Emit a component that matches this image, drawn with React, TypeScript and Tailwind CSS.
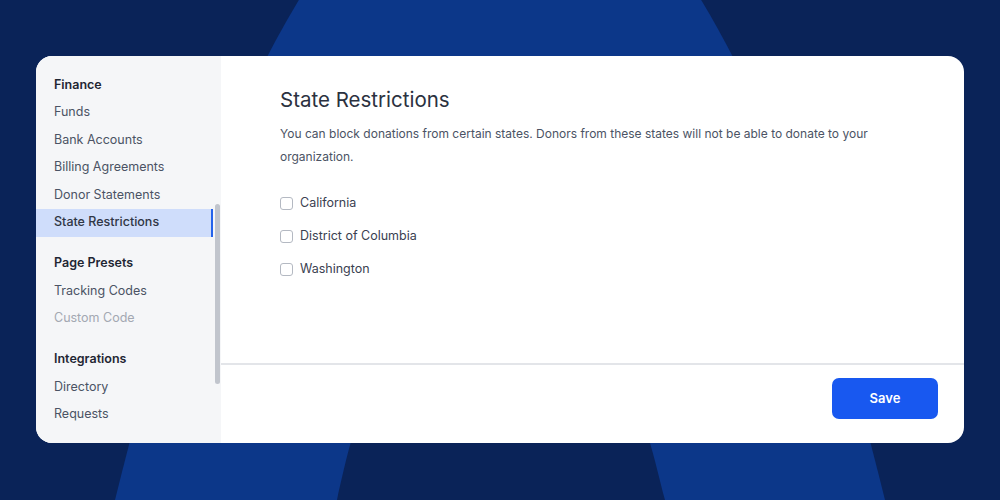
const font = { fontFamily: "Inter, 'Noto Sans', sans-serif" };

type NavGroup = { title: string; items: { label: string; active?: boolean; disabled?: boolean }[] };

const groups: NavGroup[] = [
  {
    title: "Finance",
    items: [
      { label: "Funds" },
      { label: "Bank Accounts" },
      { label: "Billing Agreements" },
      { label: "Donor Statements" },
      { label: "State Restrictions", active: true },
    ],
  },
  {
    title: "Page Presets",
    items: [{ label: "Tracking Codes" }, { label: "Custom Code", disabled: true }],
  },
  {
    title: "Integrations",
    items: [{ label: "Directory" }, { label: "Requests" }],
  },
];

const states = ["California", "District of Columbia", "Washington"];

function Backdrop() {
  return (
    <svg className="absolute inset-0" width="1000" height="500" viewBox="0 0 1000 500" aria-hidden="true">
      <path d="M115 500 C150 360 205 150 305 -10 L695 -10 C795 150 850 360 885 500 Z" fill="#0c3789" />
      <path d="M337 500 C355 420 380 300 500 250 C620 300 645 420 665 500 Z" fill="#0a2358" />
    </svg>
  );
}

function Sidebar() {
  return (
    <aside className="relative flex w-[185px] shrink-0 bg-[#f5f6f8]">
      <nav className="flex w-[177px] flex-col gap-[13.5px] pt-[15.5px]">
        {groups.map((g) => (
          <ul key={g.title} className="flex flex-col">
            <li className="flex h-[27.5px] items-center pl-[18px] text-[12.5px] font-semibold text-[#1f2633]">
              {g.title}
            </li>
            {g.items.map((it) => (
              <li
                key={it.label}
                className={
                  it.active
                    ? "flex h-[27.5px] items-center border-r-2 border-[#2563eb] bg-[#cfddfb] pl-[18px] text-[12.5px] font-medium text-[#2f3645]"
                    : it.disabled
                      ? "flex h-[27.5px] items-center pl-[18px] text-[12.5px] text-[#a3a8b2]"
                      : "flex h-[27.5px] items-center pl-[18px] text-[12.5px] text-[#4b5364]"
                }
              >
                {it.label}
              </li>
            ))}
          </ul>
        ))}
      </nav>
      <div className="absolute left-[179px] top-[148px] h-[180px] w-[5px] rounded-full bg-[#c1c5cd]" />
    </aside>
  );
}

export default function App() {
  return (
    <div className="relative h-[500px] w-[1000px] overflow-hidden bg-[#0a2358]" style={font}>
      <Backdrop />
      <div className="relative px-[36px] pt-[56px]">
        <div className="flex h-[387px] overflow-hidden rounded-[16px] bg-white">
          <Sidebar />
          <main className="flex flex-1 flex-col">
            <section className="flex-1 pl-[59px] pr-[80px] pt-[30px]">
              <h1 className="text-[20.5px] leading-[28px] text-[#2b3140]">State Restrictions</h1>
              <p className="mt-[8px] text-[12px] leading-[23px] text-[#4b5364]">
                You can block donations from certain states. Donors from these states will not be able to donate to your
                organization.
              </p>
              <ul className="mt-[25px] flex flex-col gap-[13px]">
                {states.map((s) => (
                  <li key={s} className="flex h-[20px] items-center gap-[7px]">
                    <span className="h-[13px] w-[13px] rounded-[3px] border border-[#b4b9c2] bg-white" />
                    <span className="text-[12.5px] text-[#3a4151]">{s}</span>
                  </li>
                ))}
              </ul>
            </section>
            <div className="h-[2px] bg-[#e3e5e9]" />
            <footer className="flex h-[78px] justify-end pr-[26px] pt-[13px]">
              <button className="h-[41px] w-[106px] rounded-[7px] bg-[#1858f0] text-[13px] font-semibold text-white">
                Save
              </button>
            </footer>
          </main>
        </div>
      </div>
    </div>
  );
}
